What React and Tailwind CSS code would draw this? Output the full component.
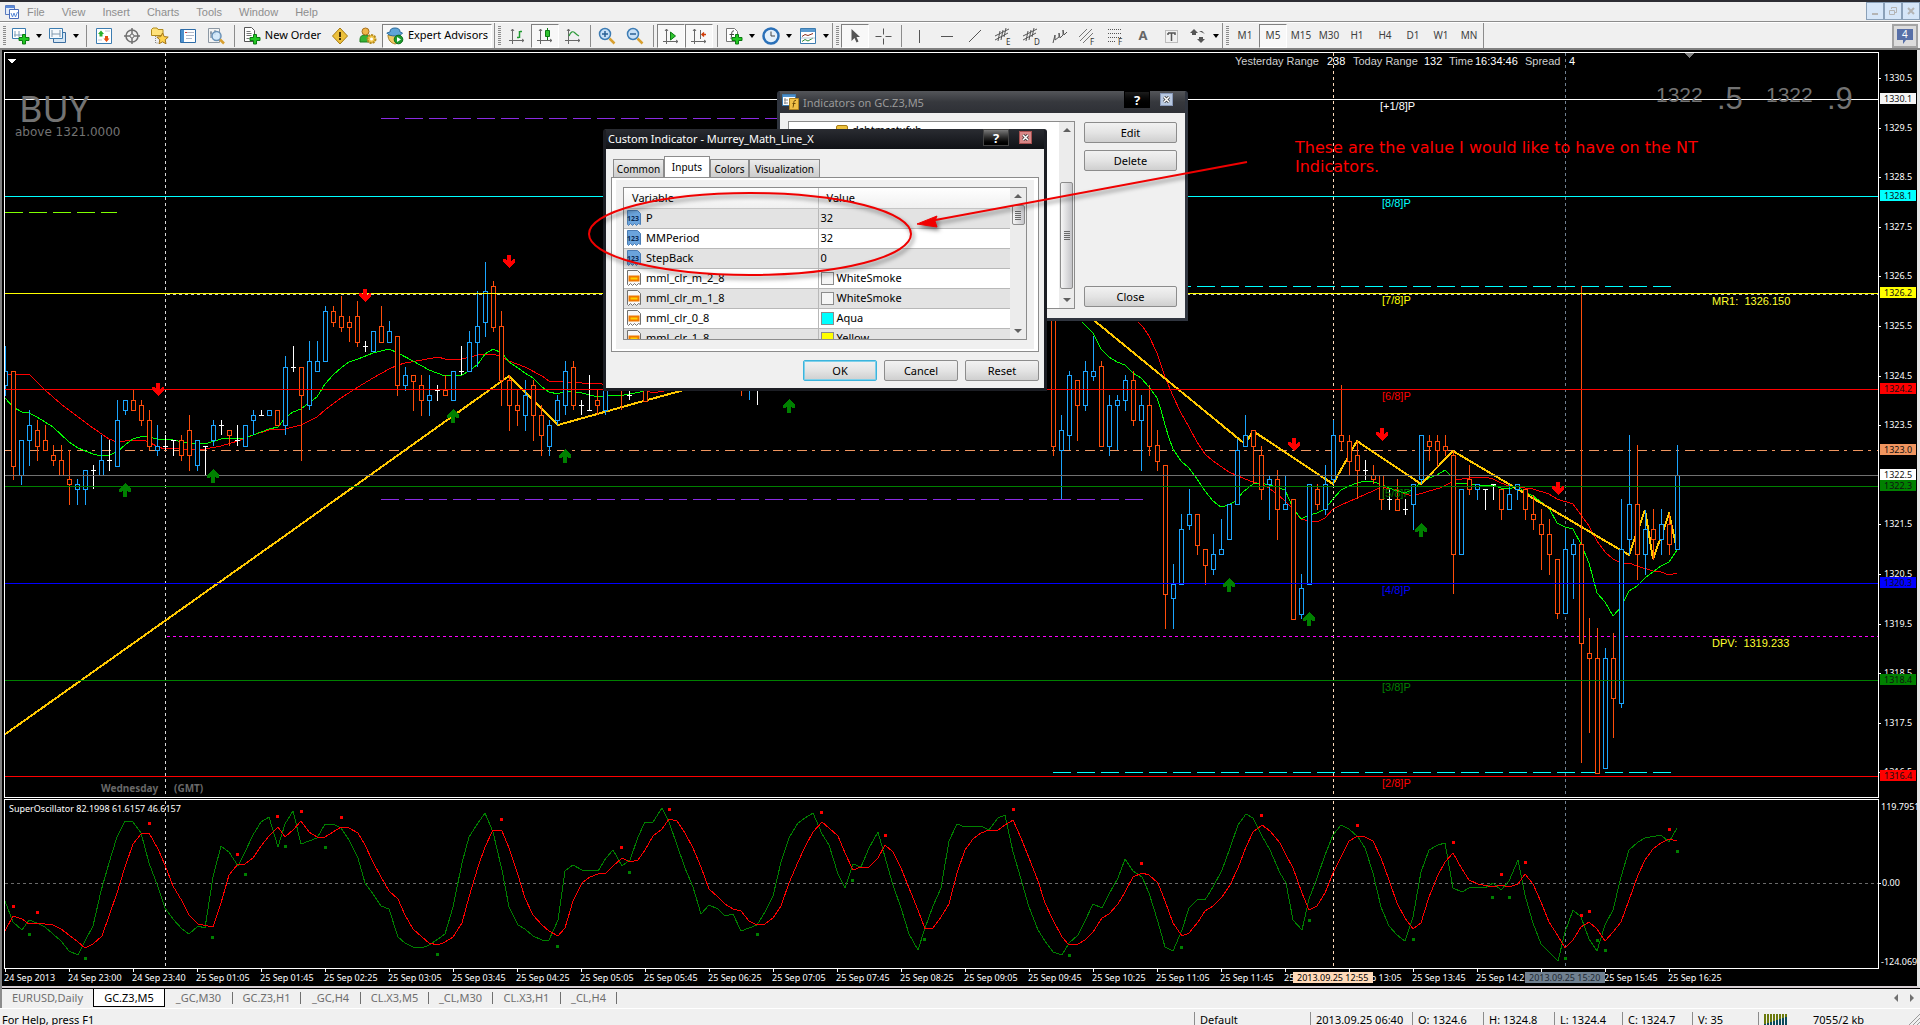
import React from "react";

const BLUE = "#1ba5ff";
const ORANGE = "#ff4d0a";
const WHITE = "#ffffff";
const colors = { b: BLUE, o: ORANGE, w: WHITE };

// [bar, kind, high, body top, body bottom, low], one group per recorded scale
const candleGroups = [
  {
    base: 200,
    unit: 3,
    rows: [
      [0, "b", 438, 514, 556, 588], [1, "o", 514, 514, 797, 840], [2, "b", 721, 721, 826, 855],
      [3, "b", 630, 676, 721, 797], [4, "o", 660, 691, 737, 783], [5, "o", 676, 721, 751, 751],
      [6, "o", 736, 766, 781, 797], [7, "o", 736, 781, 826, 826], [8, "o", 751, 838, 853, 914],
      [9, "b", 838, 853, 868, 914], [10, "b", 811, 811, 868, 914], [11, "w", 795, 811, 811, 868],
      [12, "b", 706, 781, 826, 826], [13, "w", 721, 781, 781, 812], [14, "b", 600, 661, 797, 797],
      [15, "b", 601, 601, 631, 646], [16, "o", 570, 601, 631, 631], [17, "o", 601, 616, 661, 678],
      [18, "o", 631, 661, 737, 751], [19, "b", 676, 737, 751, 767], [20, "w", 706, 737, 737, 751],
      [21, "w", 721, 721, 721, 767], [22, "o", 706, 721, 766, 782], [23, "o", 646, 691, 766, 812],
      [24, "b", 721, 721, 796, 812], [25, "w", 737, 737, 737, 826], [26, "b", 661, 676, 721, 737],
      [27, "w", 661, 676, 676, 706], [28, "o", 691, 691, 706, 737], [29, "w", 676, 721, 721, 737],
      [30, "b", 676, 676, 737, 737], [31, "b", 631, 646, 661, 706], [32, "w", 631, 646, 646, 646],
      [33, "b", 631, 631, 646, 646], [34, "o", 631, 631, 676, 676], [35, "b", 468, 500, 676, 706],
      [36, "w", 438, 500, 500, 516], [37, "o", 500, 500, 586, 782], [38, "b", 423, 484, 616, 631],
      [39, "b", 423, 484, 514, 514], [40, "b", 319, 334, 484, 484], [41, "o", 319, 334, 365, 380],
      [42, "o", 289, 349, 380, 395], [43, "o", 349, 365, 380, 425], [44, "o", 304, 349, 425, 440],
      [45, "w", 423, 438, 438, 455], [46, "b", 394, 394, 454, 454], [47, "o", 319, 379, 425, 425],
      [48, "b", 363, 394, 425, 425], [49, "o", 409, 409, 556, 588], [50, "b", 500, 526, 556, 573],
      [51, "o", 526, 526, 542, 632], [52, "o", 526, 556, 601, 647], [53, "b", 526, 586, 601, 647],
      [54, "w", 556, 571, 571, 602], [55, "o", 526, 571, 586, 586], [56, "b", 514, 514, 601, 601],
      [57, "w", 438, 514, 514, 526], [58, "b", 394, 425, 514, 514], [59, "b", 273, 379, 425, 500],
      [60, "b", 187, 274, 365, 410], [61, "o", 243, 259, 380, 395], [62, "o", 334, 379, 541, 617],
      [63, "o", 526, 541, 616, 692], [64, "o", 571, 616, 631, 678], [65, "b", 541, 586, 646, 692],
      [66, "o", 541, 556, 646, 722], [67, "o", 616, 646, 706, 767], [68, "b", 661, 676, 737, 767],
      [69, "b", 586, 601, 661, 676], [70, "b", 484, 514, 616, 646], [71, "o", 484, 500, 616, 631],
      [72, "w", 601, 616, 616, 646], [73, "w", 526, 631, 631, 631], [74, "o", 571, 601, 616, 646],
      [75, "b", 571, 571, 631, 646], [77, "o", 540, 540, 570, 631], [78, "w", 540, 586, 586, 600],
      [80, "o", 540, 540, 604, 604], [92, "o", 540, 540, 570, 588], [93, "b", 540, 540, 570, 600],
      [94, "w", 540, 560, 560, 616],
    ],
  },
  {
    base: 300,
    unit: 3,
    rows: [
      [131, "o", 0, 0, 437, 467], [132, "b", 346, 391, 451, 598], [133, "b", 213, 226, 406, 451],
      [134, "o", 241, 241, 316, 422], [135, "b", 183, 214, 316, 332], [136, "b", 108, 214, 227, 242],
      [137, "o", 183, 199, 437, 437], [138, "b", 286, 316, 437, 467], [139, "b", 286, 301, 316, 451],
      [140, "b", 226, 241, 301, 332], [141, "o", 213, 241, 361, 377], [142, "b", 286, 316, 361, 512],
      [143, "o", 256, 316, 437, 467], [144, "o", 391, 436, 482, 512], [145, "o", 496, 496, 881, 986],
      [146, "b", 792, 853, 895, 986], [147, "b", 643, 688, 853, 853], [148, "b", 568, 643, 674, 689],
      [149, "o", 643, 643, 734, 765], [150, "o", 748, 748, 794, 854], [151, "b", 703, 763, 808, 824],
      [152, "b", 658, 748, 763, 763], [153, "b", 613, 613, 718, 718], [154, "b", 418, 451, 613, 613],
      [155, "b", 346, 406, 437, 437], [156, "o", 391, 391, 437, 551], [157, "o", 437, 466, 568, 600],
      [158, "b", 526, 538, 553, 659], [159, "o", 511, 538, 628, 719], [160, "b", 526, 613, 628, 628],
      [161, "o", 598, 598, 956, 956], [162, "b", 823, 865, 941, 956], [163, "b", 553, 553, 853, 853],
      [164, "o", 553, 568, 613, 629], [165, "b", 496, 553, 628, 644], [166, "b", 361, 406, 538, 553],
      [167, "o", 256, 406, 422, 451], [168, "o", 406, 422, 482, 526], [169, "o", 422, 466, 511, 598],
      [170, "w", 481, 511, 511, 540], [171, "o", 496, 526, 538, 553], [172, "o", 526, 526, 598, 629],
      [173, "w", 568, 598, 598, 629], [174, "o", 538, 598, 629, 629], [175, "w", 598, 628, 628, 644],
      [176, "b", 553, 553, 613, 689], [177, "b", 406, 406, 538, 553], [178, "o", 406, 422, 437, 482],
      [179, "o", 406, 422, 451, 500], [180, "o", 406, 437, 451, 467], [181, "o", 452, 466, 763, 881],
      [182, "b", 568, 568, 763, 763],
    ],
  },
  {
    base: 240,
    unit: 2.8,
    rows: [
      [183, "o", 630, 670, 698, 713], [184, "b", 684, 684, 698, 727], [185, "w", 698, 698, 698, 755],
      [186, "w", 684, 684, 684, 727], [187, "o", 698, 698, 754, 783], [188, "b", 684, 712, 754, 754],
      [189, "b", 684, 684, 698, 727], [190, "o", 698, 698, 754, 783], [191, "o", 713, 768, 782, 811],
      [192, "o", 754, 796, 824, 923], [193, "o", 781, 824, 880, 937], [194, "o", 894, 894, 1045, 1060],
      [195, "b", 811, 866, 1045, 1045], [196, "b", 838, 852, 880, 1005], [197, "o", 129, 852, 1129, 1463],
      [198, "o", 1058, 1157, 1171, 1380], [199, "o", 1086, 1171, 1491, 1491], [200, "b", 1142, 1171, 1477, 1477],
      [201, "o", 1101, 1171, 1281, 1393], [202, "b", 725, 866, 1295, 1309], [203, "b", 546, 740, 838, 881],
      [204, "o", 575, 740, 880, 951], [205, "b", 755, 810, 880, 938], [206, "o", 754, 810, 838, 895],
      [207, "b", 754, 796, 838, 881], [208, "o", 767, 796, 852, 881], [209, "b", 575, 659, 866, 866],
    ],
  },
];

const trace = (x0, y0, kx, ky, list) => {
  const out = [];
  for (let i = 0; i < list.length; i += 2) {
    out.push(`${Math.round(x0 + list[i] / kx)},${Math.round(y0 + list[i + 1] / ky)}`);
  }
  return out.join(" ");
};

const slowLeft = trace(0, 200, 2.45, 3, [
  12, 523, 72, 523, 110, 570, 150, 612, 190, 650, 229, 685, 268, 718, 287, 727, 307, 723, 350, 721, 366, 725,
  386, 740, 405, 747, 425, 743, 445, 748, 503, 748, 542, 738, 582, 722, 621, 706, 660, 690, 699, 688, 738, 675,
  777, 652, 797, 630, 836, 594, 876, 562, 915, 534, 954, 508, 974, 495, 993, 488, 1033, 481, 1072, 472, 1091, 478,
  1131, 476, 1170, 466, 1209, 463, 1229, 470, 1248, 484, 1287, 502, 1327, 528, 1346, 543, 1385, 545, 1425, 550,
  1475, 553, 1568, 566, 1600, 578, 1640, 570,
]);
const fastLeft = trace(0, 200, 2.45, 3, [
  12, 595, 33, 622, 53, 635, 72, 640, 91, 652, 130, 682, 170, 727, 190, 745, 229, 762, 248, 767, 268, 766,
  287, 757, 307, 735, 326, 716, 350, 709, 386, 716, 425, 719, 464, 730, 503, 731, 542, 716, 601, 713, 621, 704,
  660, 688, 680, 682, 699, 655, 719, 635, 738, 628, 777, 590, 797, 552, 817, 524, 836, 503, 856, 487, 876, 478,
  915, 460, 954, 448, 974, 460, 1013, 484, 1052, 510, 1091, 529, 1131, 526, 1150, 514, 1170, 492, 1189, 462,
  1209, 448, 1229, 460, 1248, 486, 1268, 505, 1287, 518, 1307, 535, 1327, 560, 1346, 577, 1366, 581, 1385, 573,
  1425, 578, 1464, 592, 1484, 588, 1530, 584, 1568, 577, 1620, 560,
]);
const fastRight = [
  trace(1040, 300, 3, 3, [
    125, 66, 160, 98, 184, 147, 208, 170, 232, 187, 256, 196, 280, 218, 304, 233, 328, 262, 352, 293, 364, 330,
    376, 375, 388, 415, 400, 447, 424, 482, 448, 503, 472, 537, 496, 572, 520, 603, 544, 622, 568, 614, 592, 600,
    610, 575, 640, 551, 664, 548, 688, 556, 712, 560, 736, 570, 760, 625, 784, 657, 808, 645, 832, 638, 856, 626,
    880, 597, 904, 570, 928, 558, 952, 550, 976, 544, 1000, 545, 1024, 553, 1048, 563, 1072, 572, 1096, 578,
    1120, 566, 1144, 549, 1168, 534, 1192, 524,
  ]),
  trace(1440, 240, 3, 2.8, [
    16, 645, 32, 660, 48, 680, 88, 683, 136, 688, 160, 687, 184, 695, 208, 698, 232, 690, 256, 706, 280, 718,
    304, 734, 328, 750, 352, 792, 376, 804, 400, 810, 424, 852, 448, 905, 472, 987, 496, 1013, 520, 1052, 544, 1028,
    568, 984, 592, 969, 616, 947, 640, 930, 664, 912, 688, 902, 712, 868,
  ]),
].join(" ");
const slowRight = [
  trace(1040, 300, 3, 3, [
    295, 66, 310, 82, 328, 108, 352, 160, 376, 230, 400, 287, 424, 340, 448, 382, 472, 427, 496, 463, 520, 482,
    568, 515, 616, 536, 640, 545, 664, 551, 688, 563, 712, 583, 736, 602, 760, 628, 784, 657, 808, 663, 832, 667,
    856, 655, 880, 627, 904, 616, 952, 594, 1000, 572, 1024, 562, 1072, 570, 1096, 582, 1120, 587, 1168, 574,
  ]),
  trace(1440, 240, 3, 2.8, [
    0, 693, 48, 672, 88, 665, 136, 664, 160, 668, 184, 681, 208, 690, 256, 693, 280, 698, 328, 710, 352, 725,
    400, 740, 424, 770, 448, 800, 472, 843, 496, 873, 520, 893, 544, 903, 568, 903, 592, 913, 640, 928, 664, 929,
    688, 937, 712, 933,
  ]),
].join(" ");
const zigzagLeft = "4,735 279,540 509,376 558,425 640,402 684,390";
const zigzagRight =
  "1060,292 1096,322 1245,444 1253,431 1333,484 1357,441 1421,484 1453,451 1629,555 1645,510 1653,559 1669,514 1677,549";

const oscMain = [
  trace(0, 780, 2.45, 3, [
    12, 363, 33, 425, 53, 451, 72, 421, 91, 430, 111, 440, 130, 462, 150, 484, 170, 512, 190, 526, 209, 483,
    229, 437, 248, 333, 268, 250, 287, 172, 307, 123, 326, 127, 346, 160, 366, 250, 386, 320, 405, 383, 425, 416,
    445, 447, 464, 463, 484, 439, 503, 444, 523, 290, 542, 197, 562, 215, 582, 257, 601, 215, 621, 165, 640, 127,
    660, 112, 680, 200, 699, 132, 719, 94, 738, 192, 758, 182, 777, 175, 797, 132, 817, 132, 836, 144, 856, 180,
    876, 235, 895, 308, 915, 342, 934, 378, 954, 386, 974, 472, 993, 490, 1013, 500, 1033, 505, 1052, 496,
    1072, 477, 1091, 461, 1111, 380, 1131, 250, 1150, 170, 1170, 128, 1189, 100, 1209, 155, 1229, 270, 1248, 380,
    1268, 434, 1287, 447, 1307, 468, 1327, 481, 1346, 481, 1366, 420, 1385, 273, 1405, 256, 1425, 271, 1464, 274,
    1484, 234, 1503, 209, 1523, 259, 1543, 240, 1562, 170,
  ]),
  trace(640, 780, 2.45, 3, [
    12, 126, 33, 127, 53, 84, 72, 125, 91, 195, 111, 265, 130, 322, 150, 403, 170, 376, 190, 387, 209, 409,
    229, 403, 248, 454, 268, 443, 287, 434, 307, 395, 326, 348, 346, 245, 366, 175, 386, 130, 405, 113, 425, 99,
    445, 162, 464, 195, 484, 282, 503, 325, 523, 252, 542, 260, 562, 203, 582, 157, 601, 230, 621, 315, 640, 385,
    660, 463, 680, 511, 699, 445, 719, 378, 738, 325, 758, 183, 777, 132, 797, 142, 836, 139, 856, 149, 876, 114,
    895, 105, 915, 215, 934, 296, 954, 380, 974, 450, 993, 483, 1013, 516, 1033, 526, 1052, 490, 1072, 466,
    1091, 423, 1111, 373, 1131, 385, 1150, 343, 1170, 295, 1189, 238, 1209, 272, 1229, 290, 1248, 340, 1268, 425,
    1287, 500, 1307, 514, 1327, 450, 1346, 385, 1366, 358, 1385, 361, 1405, 320, 1425, 270, 1445, 205, 1464, 135,
    1484, 103, 1503, 115, 1523, 167, 1543, 210, 1568, 280,
  ]),
  trace(1280, 780, 2.45, 3, [
    14, 308, 33, 420, 53, 451, 72, 358, 91, 295, 111, 225, 131, 165, 150, 136, 170, 147, 190, 172, 209, 203,
    229, 280, 248, 380, 268, 437, 287, 464, 307, 484, 326, 410, 346, 275, 366, 210, 386, 196, 405, 189, 425, 323,
    445, 337, 464, 325, 484, 321, 503, 325, 523, 308, 542, 331, 562, 303, 582, 241, 601, 345, 621, 430, 640, 492,
    660, 516, 680, 542, 699, 455, 719, 391, 738, 410, 758, 478, 777, 514, 797, 435, 817, 390, 836, 290, 856, 211,
    876, 186, 895, 173, 934, 166, 954, 187, 972, 143,
  ]),
].join(" ");
const oscSignal = [
  trace(0, 780, 2.45, 3, [
    12, 454, 33, 408, 53, 416, 72, 433, 91, 428, 130, 434, 150, 448, 170, 464, 190, 487, 209, 505, 229, 493,
    250, 468, 268, 408, 287, 340, 307, 260, 326, 193, 346, 162, 366, 160, 386, 208, 405, 254, 425, 318, 445, 363,
    464, 406, 484, 433, 523, 440, 542, 370, 562, 285, 582, 253, 601, 253, 621, 235, 640, 198, 660, 167, 680, 140,
    699, 170, 719, 150, 738, 124, 758, 156, 777, 170, 797, 172, 817, 155, 836, 142, 856, 145, 876, 158, 895, 195,
    915, 245, 934, 290, 954, 334, 974, 356, 993, 405, 1013, 447, 1033, 472, 1052, 490, 1072, 494, 1091, 485,
    1111, 471, 1131, 430, 1150, 350, 1170, 262, 1189, 200, 1209, 151, 1229, 152, 1248, 205, 1268, 285, 1287, 355,
    1307, 404, 1327, 436, 1346, 453, 1366, 469, 1385, 443, 1405, 362, 1425, 310, 1445, 291, 1464, 283, 1484, 280,
    1503, 257, 1523, 235, 1543, 246, 1562, 240,
  ]),
  trace(640, 780, 2.45, 3, [
    12, 210, 33, 168, 53, 148, 72, 118, 91, 124, 111, 160, 130, 205, 150, 260, 170, 327, 190, 352, 209, 371,
    229, 387, 248, 394, 268, 424, 287, 434, 307, 433, 326, 415, 346, 378, 366, 310, 386, 245, 405, 200, 425, 155,
    445, 127, 464, 145, 484, 168, 503, 220, 523, 271, 542, 262, 562, 262, 582, 235, 601, 196, 621, 217, 640, 265,
    660, 325, 680, 390, 699, 448, 719, 444, 738, 412, 758, 372, 777, 280, 797, 211, 817, 178, 836, 160, 856, 151,
    876, 151, 895, 134, 915, 119, 934, 175, 954, 235, 974, 303, 993, 370, 1013, 420, 1033, 470, 1052, 496,
    1072, 492, 1091, 480, 1111, 455, 1131, 414, 1150, 401, 1170, 372, 1189, 335, 1209, 290, 1229, 280, 1248, 284,
    1268, 310, 1287, 362, 1307, 428, 1327, 469, 1346, 460, 1366, 425, 1385, 394, 1405, 378, 1425, 352, 1445, 315,
    1464, 265, 1484, 200, 1503, 155, 1523, 136, 1543, 153, 1568, 190,
  ]),
  trace(1280, 780, 2.45, 3, [
    14, 225, 33, 265, 53, 340, 72, 390, 91, 378, 111, 340, 131, 280, 150, 230, 170, 184, 190, 169, 209, 170,
    229, 184, 248, 235, 268, 300, 287, 370, 307, 415, 326, 448, 346, 430, 366, 350, 386, 285, 405, 245, 425, 218,
    445, 268, 464, 300, 484, 312, 523, 322, 542, 316, 562, 322, 582, 313, 601, 281, 621, 312, 640, 366, 660, 425,
    680, 467, 699, 503, 719, 480, 738, 440, 758, 425, 777, 447, 797, 482, 817, 457, 836, 425, 856, 360, 876, 285,
    895, 240, 915, 207, 934, 190, 954, 178, 972, 182,
  ]),
].join(" ");

const oscDots = {
  red: [
    [13, 906], [37, 912], [149, 823], [237, 854], [277, 816], [301, 811], [341, 817], [501, 819], [621, 847],
    [669, 809], [821, 812], [885, 835], [1013, 809], [1141, 863], [1261, 815], [1357, 825], [1453, 842],
    [1501, 874], [1525, 862], [1581, 915], [1589, 911], [1669, 829],
  ],
  green: [
    [29, 934], [85, 958], [212, 937], [245, 874], [285, 846], [325, 847], [437, 954], [557, 946], [629, 872],
    [757, 934], [852, 880], [924, 939], [1069, 955], [1181, 947], [1309, 920], [1413, 939], [1492, 897],
    [1509, 897], [1565, 958], [1597, 940], [1605, 950], [1677, 851],
  ],
};

const levels = [
  { y: 99, color: "#ffffff", label: "[+1/8]P", price: "1330.1", box: "#f5f5f5" },
  { y: 196, color: "#00ffff", label: "[8/8]P", price: "1328.1" },
  { y: 293, color: "#ffff00", label: "[7/8]P", price: "1326.2" },
  { y: 389, color: "#ff0000", label: "[6/8]P", price: "1324.2" },
  { y: 486, color: "#008000", label: "[5/8]P", price: "1322.3" },
  { y: 583, color: "#0000ff", label: "[4/8]P", price: "1320.3" },
  { y: 680, color: "#008000", label: "[3/8]P", price: "1318.4" },
  { y: 776, color: "#ff0000", label: "[2/8]P", price: "1316.4" },
];

const sellArrows = [[158, 389], [365, 295], [509, 261], [1294, 444], [1382, 434], [1558, 488]];
const buyArrows = [[125, 490], [213, 476], [453, 416], [565, 456], [789, 406], [1229, 585], [1309, 619], [1421, 530]];

const times = [
  "24 Sep 2013", "24 Sep 23:00", "24 Sep 23:40", "25 Sep 01:05", "25 Sep 01:45", "25 Sep 02:25", "25 Sep 03:05",
  "25 Sep 03:45", "25 Sep 04:25", "25 Sep 05:05", "25 Sep 05:45", "25 Sep 06:25", "25 Sep 07:05", "25 Sep 07:45",
  "25 Sep 08:25", "25 Sep 09:05", "25 Sep 09:45", "25 Sep 10:25", "25 Sep 11:05", "25 Sep 11:45", "25 Sep 12:25",
  "25 Sep 13:05", "25 Sep 13:45", "25 Sep 14:25", "25 Sep 15:05", "25 Sep 15:45", "25 Sep 16:25",
];

function Candle({ row, base, unit }) {
  const [bar, kind, high, top, bottom, low] = row;
  const x = 5 + bar * 8;
  const at = (v) => Math.round(base + v / unit);
  const color = colors[kind];
  const bodyTop = at(top);
  const bodyHeight = Math.max(at(bottom) - bodyTop, 1);
  return (
    <g fill={color}>
      <rect x={x} y={at(high)} width="1" height={Math.max(at(low) - at(high), 1)} />
      {kind === "w" ? (
        <rect x={x - 2} y={bodyTop} width="5" height="1" />
      ) : (
        <>
          <rect x={x - 2} y={bodyTop} width="5" height={bodyHeight + 1} />
          <rect x={x - 1} y={bodyTop + 1} width="3" height={bodyHeight - 1} fill="#000" />
        </>
      )}
    </g>
  );
}

function HLine({ y, color, from = 0, to = 4000, dash }) {
  return <line x1={from} x2={to} y1={y} y2={y} stroke={color} strokeDasharray={dash} transform="translate(0 0.5)" />;
}

function Verticals({ top, bottom }) {
  const rows = [[165, "#d8d8d8"], [1333, "#ffdab9"], [1565, "#708090"]];
  return rows.map(([x, color]) => (
    <line key={x} x1={x} x2={x} y1={top} y2={bottom} stroke={color} strokeDasharray="3 3" transform="translate(0.5 0)" />
  ));
}

function PricePane() {
  return (
    <svg className="block h-full w-full font-['Liberation_Sans',Arial,sans-serif]" shapeRendering="crispEdges">
      <g transform="translate(-5 -53)" fill="none">
        <Verticals top={53} bottom={797} />
        <HLine y={294} color="#c0c0c0" from={167} dash="3 3" />
        <HLine y={636} color="#ff00ff" from={167} dash="3 3" />
        <HLine y={118} color="#8a2be2" from={381} to={1143} dash="18 6" />
        <HLine y={499} color="#8a2be2" from={381} to={1143} dash="18 6" />
        <HLine y={212} color="#7fff00" from={5} to={117} dash="18 6" />
        <HLine y={286} color="#00ffff" from={1053} to={1671} dash="18 6" />
        <HLine y={772} color="#00ffff" from={1053} to={1671} dash="18 6" />
        <HLine y={450} color="#f0955f" from={5} dash="10 5 3 6" />
        <polyline points={slowLeft} stroke="#ff0000" />
        <polyline points={fastLeft} stroke="#00ff00" />
        <polyline points={slowRight} stroke="#ff0000" />
        <polyline points={fastRight} stroke="#00ff00" />
        <polyline points={zigzagLeft} stroke="#ffc800" strokeWidth="2" />
        <polyline points={zigzagRight} stroke="#ffc800" strokeWidth="2" />
        {candleGroups.map((group) =>
          group.rows.map((row) => <Candle key={row[0]} row={row} base={group.base} unit={group.unit} />)
        )}
        <HLine y={475} color="#707070" />
        {levels.map((l) => (
          <HLine key={l.y} y={l.y} color={l.color} />
        ))}
        {sellArrows.map(([x, y]) => (
          <path
            key={x}
            d="M-2-6h4v6l2-2h2v3L0 7-6 1v-3h2l2 2z"
            transform={`translate(${x} ${y})`}
            fill="#ff0000"
          />
        ))}
        {buyArrows.map(([x, y]) => (
          <path
            key={x}
            d="M-2 7h4V1l2 1h2v-3L0-7-6-1v3h2l2-1z"
            transform={`translate(${x} ${y})`}
            fill="#008000"
          />
        ))}
        <path d="M8 59h8l-4 5z" fill="#fff" />
        <path d="M1684 53h10l-5 5z" fill="#808080" />
        {levels.map((l) => (
          <text key={l.y} x={l.label.length > 6 ? 1380 : 1382} y={l.y + 11} fontSize="11" fill={l.color}>
            {l.label}
          </text>
        ))}
        <g fontSize="11" fill="#d0d0d0">
          <text x="1235" y="65">Yesterday Range</text>
          <text x="1327" y="65" fill="#fff">238</text>
          <text x="1353" y="65">Today Range</text>
          <text x="1424" y="65" fill="#fff">132</text>
          <text x="1449" y="65">Time</text>
          <text x="1475" y="65" fill="#fff">16:34:46</text>
          <text x="1525" y="65">Spread</text>
          <text x="1569" y="65" fill="#fff">4</text>
          <text x="1712" y="305" fill="#ffff30" xmlSpace="preserve">MR1:  1326.150</text>
          <text x="1712" y="647" fill="#ffff30" xmlSpace="preserve">DPV:  1319.233</text>
        </g>
        <g fill="#737373">
          <text x="1656" y="102" fontSize="21">1322</text>
          <text x="1717" y="109" fontSize="31">.5</text>
          <text x="1766" y="102" fontSize="21">1322</text>
          <text x="1827" y="109" fontSize="31">.9</text>
          <text x="19" y="122" fontSize="36" className="font-['Noto_Sans',sans-serif]">BUY</text>
          <text x="15" y="136" fontSize="12" className="font-['DejaVu_Sans',sans-serif]">above 1321.0000</text>
        </g>
        <g fontSize="10" fontWeight="700" fill="#696969" className="font-['Noto_Sans',sans-serif]">
          <text x="101" y="792">Wednesday</text>
          <text x="174" y="792">(GMT)</text>
        </g>
      </g>
    </svg>
  );
}

function OscillatorPane() {
  return (
    <svg className="block h-full w-full font-['Noto_Sans',sans-serif]" shapeRendering="crispEdges">
      <g transform="translate(-5 -800)" fill="none">
        <HLine y={883} color="#696969" from={5} dash="3 3" />
        <Verticals top={801} bottom={968} />
        <polyline points={oscMain} stroke="#008000" />
        <polyline points={oscSignal} stroke="#ff0000" />
        {oscDots.red.map(([x, y]) => (
          <rect key={x} x={x - 1} y={y - 1} width="3" height="3" fill="#ff0000" />
        ))}
        {oscDots.green.map(([x, y]) => (
          <rect key={x} x={x - 1} y={y - 1} width="3" height="3" fill="#008000" />
        ))}
        <text x="9" y="812" fontSize="9" fill="#fff">SuperOscillator 82.1998 61.6157 46.6157</text>
      </g>
    </svg>
  );
}

function TimeAxis() {
  return (
    <svg className="block h-[17px] w-full font-['Noto_Sans',sans-serif]" shapeRendering="crispEdges">
      <g fontSize="9" fill="#fff">
        {times.map((t, i) => (
          <g key={t}>
            <rect x={1 + i * 64} y="0" width="1" height="3" />
            <text x={i * 64} y="12">{t}</text>
          </g>
        ))}
        <rect x="1289" y="3" width="80" height="11" fill="#ffdab9" />
        <text x="1293" y="12" fill="#000">2013.09.25 12:55</text>
        <rect x="1521" y="3" width="80" height="11" fill="#708090" />
        <text x="1525" y="12" fill="#202830">2013.09.25 15:20</text>
      </g>
    </svg>
  );
}

function PriceAxis() {
  const ticks = Array.from({ length: 15 }, (_, i) => ({ y: Math.round(78 + i * 49.6), price: (1330.5 - i).toFixed(1) }));
  const boxes = [
    ...levels.map((l) => ({ y: l.y, price: l.price, fill: l.box || l.color })),
    { y: 450, price: "1323.0", fill: "#f0955f" },
    { y: 475, price: "1322.5", fill: "#ffffff" },
  ];
  return (
    <svg className="block h-full w-full font-['Noto_Sans',sans-serif]" shapeRendering="crispEdges">
      <g transform="translate(-1879 -52)" fontSize="9" fill="#fff">
        {ticks
          .filter((t) => t.price !== "1322.5")
          .map((t) => (
            <g key={t.price}>
              <rect x="1879" y={t.y} width="2" height="1" />
              <text x="1884" y={t.y + 3}>{t.price}</text>
            </g>
          ))}
        {boxes.map((b) => (
          <g key={b.price}>
            <rect x="1880" y={b.y - 6} width="36" height="11" fill={b.fill} />
            <text x="1884" y={b.y + 3} fill="#101010">{b.price}</text>
          </g>
        ))}
        <text x="1881" y="810">119.7951</text>
        <rect x="1879" y="883" width="2" height="1" />
        <text x="1882" y="886">0.00</text>
        <text x="1881" y="965">-124.069</text>
      </g>
    </svg>
  );
}

const Icon = ({ children, className = "" }) => (
  <svg viewBox="0 0 18 18" className={`h-[18px] w-[18px] shrink-0 ${className}`} fill="none">
    {children}
  </svg>
);

const Plus = () => (
  <path d="M10.5 7.5h3v3h3.5v3h-3.5V17h-3v-3.500H7v-3h3.500z" fill="#22c822" stroke="#0b7a12" />
);

const icons = {
  newChart: (
    <Icon>
      <path d="M.5 1.500h13v10h-13z" fill="#fff" stroke="#3c7cb0" />
      <path d="M3 4v6M2 8h9M7 4v6" stroke="#7f9fb8" />
      <Plus />
    </Icon>
  ),
  profiles: (
    <Icon>
      <path d="M4.500 5.500h12v10h-12z" fill="#d6e6f4" stroke="#3c6ea0" />
      <path d="M.5 1.500h13v10H.5z" fill="#f4f8fc" stroke="#3c7cb0" />
      <path d="M3 3v7M11 3v7M3 7h8" stroke="#8098ac" />
    </Icon>
  ),
  market: (
    <Icon>
      <path d="M1.500 1.500h15v15h-15z" fill="#fff" stroke="#3c7cb0" />
      <path d="M10 4h5M3 13h4" stroke="#c4ccd4" />
      <path d="M3 7 6 3.500 9 7H7.500v2.500h-3V7z" fill="#2cb02c" />
      <path d="m8.500 11.500 3 3.500 3-3.500H13v-2.500h-3v2.500z" fill="#e85010" />
    </Icon>
  ),
  target: (
    <Icon>
      <circle cx="9" cy="9" r="6" stroke="#707070" strokeWidth="1.500" />
      <path d="M9 1v16M1 9h16" stroke="#707070" strokeWidth="1.500" />
      <circle cx="9" cy="9" r="2" fill="#eee" stroke="#707070" />
    </Icon>
  ),
  favorites: (
    <Icon>
      <path d="M.5 2.500 2 1h4l1 1.500h5v6H.5z" fill="#ffe27a" stroke="#b08a1c" />
      <path d="M4.500 9v7h3" stroke="#888" strokeDasharray="1 1" />
      <path d="m11.500 6 1.700 3.600 4 .5-3 2.700.8 4-3.500-2-3.500 2 .8-4-3-2.700 4-.5z" fill="#ffd34d" stroke="#a37416" />
    </Icon>
  ),
  dataWindow: (
    <Icon>
      <path d="M1.500 2.500h15v13h-15z" fill="#fff" stroke="#2e6ca8" />
      <path d="M2 3h3v12H2z" fill="#4b8fcc" />
      <path d="M7 5.500h8M7 8.500h8M7 11.500h6" stroke="#b0b8c8" />
      <path d="M6 5.500h2" stroke="#d04040" />
    </Icon>
  ),
  tester: (
    <Icon>
      <path d="M1.500 1.500h11v14h-11z" fill="#f4f4f4" stroke="#8c98a4" />
      <path d="M4 4v7M3 6h2M8 3v5" stroke="#6c7c90" />
      <circle cx="9.500" cy="9" r="4.500" fill="#cfe6fa" fillOpacity=".85" stroke="#6a92b8" strokeWidth="1.500" />
      <path d="m13 12.500 4 4" stroke="#d8a030" strokeWidth="2.500" />
    </Icon>
  ),
  order: (
    <Icon>
      <path d="M1.500.5h7l3 3v11h-10z" fill="#fff" stroke="#555" />
      <path d="M3.500 4.500h4M3.500 6.500h5M3.500 8.500h5M3.500 11.500h3" stroke="#777" />
      <Plus />
    </Icon>
  ),
  warning: (
    <Icon>
      <path d="m9 1 7.500 8L9 17 1.500 9z" fill="#ecc03c" stroke="#a87c14" />
      <path d="M8 5h2v5H8zM8 11h2v2H8z" fill="#4a3408" />
    </Icon>
  ),
  expert: (
    <Icon>
      <path d="M1 13c0-4 2-5 5-5s5 1 5 5v2H1z" fill="#36b336" stroke="#1d7d1d" />
      <circle cx="6.500" cy="4.500" r="3.500" fill="#f0b54a" stroke="#a8701c" />
      <circle cx="12.500" cy="12" r="4" fill="#f2c84c" stroke="#b58a1e" strokeDasharray="2 1" strokeWidth="2" />
      <circle cx="12.500" cy="12" r="1.500" fill="#fff" />
    </Icon>
  ),
  robot: (
    <Icon>
      <path d="M2 8c0 5 3 8 7 9 4-1 6-4 6-8z" fill="#f0c860" stroke="#a8842c" />
      <path d="M4 5c0-3 2-4 5-4s5 1 5 4l2.500 1c-1 2-4 3-7.500 3S2 8 .8 6z" fill="#5fa4d8" stroke="#2f6d9c" />
      <circle cx="12.500" cy="12.500" r="4.300" fill="#1c9c2c" stroke="#0b6a18" />
      <path d="m11 10 4 2.500-4 2.500z" fill="#fff" />
    </Icon>
  ),
  bars: (
    <Icon>
      <path d="M4.500 2v15M1 13.500h15M3 4l1.500-2L6 4M14 12l2 1.500-2 1.500" stroke="#686868" />
      <path d="M9 10.500h2M11.500 11V4M12 4.500h2" stroke="#1f9a2f" strokeWidth="1.500" />
    </Icon>
  ),
  candles: (
    <Icon>
      <path d="M4.500 2v15M1 13.500h15M3 4l1.500-2L6 4M14 12l2 1.500-2 1.500" stroke="#686868" />
      <path d="M11.500 1v12" stroke="#0b7a12" />
      <path d="M9.500 3.500h4v6h-4z" fill="#2dc42d" stroke="#0b7a12" />
    </Icon>
  ),
  lineChart: (
    <Icon>
      <path d="M4.500 2v15M1 13.500h15M3 4l1.500-2L6 4M14 12l2 1.500-2 1.500" stroke="#686868" />
      <path d="M5 9c2-5 4-5 6-3 1 1 2 2 4 3" stroke="#2d9a3a" strokeWidth="1.200" />
    </Icon>
  ),
  zoomIn: (
    <Icon>
      <circle cx="7" cy="7" r="5.500" fill="#c8e0f6" stroke="#3d7cb4" strokeWidth="1.500" />
      <path d="M4 7h6M7 4v6" stroke="#2a6095" strokeWidth="1.500" />
      <path d="m11.500 11.500 5 5" stroke="#d8a030" strokeWidth="2.500" />
    </Icon>
  ),
  zoomOut: (
    <Icon>
      <circle cx="7" cy="7" r="5.500" fill="#c8e0f6" stroke="#3d7cb4" strokeWidth="1.500" />
      <path d="M4 7h6" stroke="#2a6095" strokeWidth="1.500" />
      <path d="m11.500 11.500 5 5" stroke="#d8a030" strokeWidth="2.500" />
    </Icon>
  ),
  autoScroll: (
    <Icon>
      <path d="M4.500 2v15M1 14.500h15M3 4l1.500-2L6 4M14 13l2 1.500-2 1.500" stroke="#686868" />
      <path d="m8.500 5 5 4-5 4z" fill="#2dc42d" stroke="#0b7a12" />
    </Icon>
  ),
  shift: (
    <Icon>
      <path d="M4.500 2v15M1 14.500h15M3 4l1.500-2L6 4M14 13l2 1.500-2 1.500M10.500 3v9" stroke="#686868" />
      <path d="M12 7.500h4M14 5.500l-2 2 2 2" stroke="#d03c08" strokeWidth="1.500" />
    </Icon>
  ),
  indicators: (
    <Icon>
      <path d="M1.500 1.500h8l3 3v10h-11z" fill="#fff" stroke="#777" />
      <path d="M9 4C6 3 7 8 6 12M4.500 7.500H9" stroke="#444" />
      <Plus />
    </Icon>
  ),
  clock: (
    <Icon>
      <circle cx="9" cy="9" r="7.500" fill="#e4f0fa" stroke="#2a70b8" strokeWidth="2.500" />
      <path d="M9 4.500V9h4" stroke="#444" />
    </Icon>
  ),
  template: (
    <Icon>
      <path d="M1.500 1.500h15v15h-15z" fill="#fff" stroke="#3c7cb0" />
      <path d="M2 2h14v3H2z" fill="#5a9ad0" />
      <path d="m3 9.500 3-2 3 1 5-2" stroke="#8a3020" />
      <path d="m3 14.500 3-2 3 1.500 5-3" stroke="#2d8a3a" />
      <path d="M2 11h14" stroke="#b8c8d8" />
    </Icon>
  ),
  cursor: (
    <Icon>
      <path d="M5.500 2v12l3-3 2 4.500 2-1-2-4.500H14z" fill="#555" />
    </Icon>
  ),
  cross: (
    <Icon>
      <path d="M9.500 1.500v6M9.500 11.500v6M1.500 9.500h6M11.500 9.500h6" stroke="#555" />
    </Icon>
  ),
  vline: (
    <Icon>
      <path d="M9.500 3v13" stroke="#555" />
    </Icon>
  ),
  hline: (
    <Icon>
      <path d="M3 9.500h12" stroke="#555" />
    </Icon>
  ),
  trend: (
    <Icon>
      <path d="m3 15 12-12" stroke="#555" />
    </Icon>
  ),
  channelE: (
    <Icon>
      <path d="m1 9 14-7M1 13l13-7M4 14l2-10M7 13l2-10M10 10l2-9" stroke="#555" />
      <text x="12" y="18" fontSize="8" fill="#333">E</text>
    </Icon>
  ),
  channelD: (
    <Icon>
      <path d="m1 9 14-7M1 13l13-7M4 14l2-10M7 13l2-10M10 10l2-9" stroke="#555" />
      <text x="12" y="18" fontSize="8" fill="#333">D</text>
    </Icon>
  ),
  fork: (
    <Icon>
      <path d="m3 16 2-8v5l4-3V6l1 5 3-3V3l1 5 3-3" stroke="#555" />
    </Icon>
  ),
  fibChannel: (
    <Icon>
      <path d="m1 10 8-8M2 14 14 2M5 16 15 6" stroke="#777" />
      <text x="12" y="18" fontSize="8" fill="#333">F</text>
    </Icon>
  ),
  fib: (
    <Icon>
      <path d="M2 2.500h13M2 6.500h13M2 10.500h13M2 14.500h8" stroke="#555" strokeDasharray="1 1" />
      <text x="12" y="18" fontSize="8" fill="#333">F</text>
    </Icon>
  ),
  textLabel: (
    <Icon>
      <path d="M3.500 3.500h12v12h-12z" stroke="#888" strokeDasharray="1 1" />
      <path d="M6 6h7v2M9.500 6v8M6 6v2" stroke="#555" strokeWidth="1.500" />
    </Icon>
  ),
  arrows: (
    <Icon>
      <path d="m1 6 4-4 4 4H7v2H3V6zM16 12l-4 4-4-4h2v-2h4v2zM10 4h3l3 3" fill="#555" />
    </Icon>
  ),
};

function ToolButton({ icon, label, pressed, children, className = "w-7" }) {
  const look = pressed
    ? "border-t-[#808080] border-l-[#808080] border-r-white border-b-white bg-[#f8f8f8]"
    : "border-transparent";
  return (
    <button
      type="button"
      aria-label={label}
      aria-pressed={pressed}
      className={`flex h-[24px] shrink-0 items-center justify-center border ${look} ${className}`}
    >
      {icon && icons[icon]}
      {children}
    </button>
  );
}

function DropButton({ icon, label }) {
  return (
    <ToolButton icon={icon} label={label} className="w-[37px] gap-1.5">
      <svg viewBox="0 0 6 4" className="h-1 w-1.5">
        <path d="M0 0h6L3 4z" fill="#000" />
      </svg>
    </ToolButton>
  );
}

const Sep = ({ className = "w-2" }) => (
  <div className={`flex shrink-0 justify-center ${className}`}>
    <div className="h-[22px] w-px bg-[#8c8c8c]" />
  </div>
);

const Grip = () => (
  <div className="flex shrink-0 items-center">
    <div className="h-[26px] w-px bg-[#8c8c8c]" />
    <svg className="mr-[2px] ml-[3px] h-5 w-[3px]">
      <path d="M1.500 0v20" stroke="#8c8c8c" strokeWidth="3" strokeDasharray="1 1" />
    </svg>
  </div>
);

function MenuBar() {
  const items = ["File", "View", "Insert", "Charts", "Tools", "Window", "Help"];
  return (
    <nav className="flex h-5 items-center border-b border-[#8c8c8c] pl-[5px] font-['Liberation_Sans',Arial,sans-serif] text-[11px] text-[#8e8e8e]">
      <svg viewBox="0 0 14 14" className="h-[14px] w-[14px]">
        <path d="M.5.500h9v9h-9z" fill="#e4ecf8" stroke="#5a7cc0" />
        <path d="M1 1h8v2H1z" fill="#5a8ad8" />
        <path d="M4.500 4.500h9v9h-9z" fill="#fff" stroke="#4a6cb8" />
        <path d="m6 8 1.500 4L9 8l1.500 4 2-5" fill="none" stroke="#5a8ad8" />
      </svg>
      <div className="flex pl-2">
        {items.map((item) => (
          <button key={item} type="button" className="pr-[17px] leading-4">
            {item}
          </button>
        ))}
      </div>
      <div className="ml-auto flex self-start">
        {["Minimize", "Restore", "Close"].map((name, i) => (
          <button
            key={name}
            type="button"
            aria-label={name}
            className="flex h-[18px] w-[18px] items-center justify-center border border-[#8aa0b8] bg-[#d6e6f8]"
          >
            <svg viewBox="0 0 10 10" className="h-[10px] w-[10px]" fill="none" stroke="#b4b4b4">
              {i === 0 && <path d="M2 8h6" strokeWidth="2" />}
              {i === 1 && <path d="M3.500 3V1.500h5v5H7M1.500 4.500h5v4h-5z" />}
              {i === 2 && <path d="m2 2 6 6M8 2 2 8" strokeWidth="2" />}
            </svg>
          </button>
        ))}
      </div>
    </nav>
  );
}

function Toolbar() {
  const frames = ["M1", "M5", "M15", "M30", "H1", "H4", "D1", "W1", "MN"];
  return (
    <div className="flex h-[26px] items-center border-t border-white pr-[2px] text-[11px] text-black">
      <svg className="mr-[2px] ml-[3px] h-5 w-[3px]">
        <path d="M1.500 0v20" stroke="#8c8c8c" strokeWidth="3" strokeDasharray="1 1" />
      </svg>
      <DropButton icon="newChart" label="New chart" />
      <DropButton icon="profiles" label="Profiles" />
      <Sep />
      <ToolButton icon="market" label="Market watch" />
      <ToolButton icon="target" label="Data window" />
      <ToolButton icon="favorites" label="Navigator" />
      <ToolButton icon="dataWindow" label="Terminal" />
      <ToolButton icon="tester" label="Strategy tester" />
      <Sep />
      <ToolButton icon="order" label="New Order" className="w-[88px] gap-1">
        New Order
      </ToolButton>
      <ToolButton icon="warning" label="Alerts" />
      <ToolButton icon="expert" label="Options" />
      <ToolButton icon="robot" label="Expert Advisors" pressed className="mr-[2px] w-[110px] gap-1">
        Expert Advisors
      </ToolButton>
      <Grip />
      <ToolButton icon="bars" label="Bar chart" />
      <ToolButton icon="candles" label="Candlesticks" pressed />
      <ToolButton icon="lineChart" label="Line chart" />
      <Sep className="w-1.5" />
      <ToolButton icon="zoomIn" label="Zoom in" />
      <ToolButton icon="zoomOut" label="Zoom out" />
      <Sep />
      <ToolButton icon="autoScroll" label="Auto scroll" pressed />
      <ToolButton icon="shift" label="Chart shift" pressed />
      <Sep />
      <DropButton icon="indicators" label="Indicators" />
      <DropButton icon="clock" label="Periods" />
      <DropButton icon="template" label="Templates" />
      <Grip />
      <ToolButton icon="cursor" label="Cursor" pressed />
      <ToolButton icon="cross" label="Crosshair" />
      <Sep />
      <ToolButton icon="vline" label="Vertical line" />
      <ToolButton icon="hline" label="Horizontal line" />
      <ToolButton icon="trend" label="Trendline" />
      <ToolButton icon="channelE" label="Equidistant channel" />
      <ToolButton icon="channelD" label="Deviation channel" />
      <ToolButton icon="fork" label="Pitchfork" />
      <ToolButton icon="fibChannel" label="Fibonacci channel" />
      <ToolButton icon="fib" label="Fibonacci retracement" />
      <ToolButton label="Text">
        <span className="text-[13px] font-bold text-[#666]">A</span>
      </ToolButton>
      <ToolButton icon="textLabel" label="Text label" />
      <DropButton icon="arrows" label="Arrows" />
      <Grip />
      {frames.map((f) => (
        <ToolButton key={f} label={f} pressed={f === "M5"}>
          <span className="text-[10px] text-[#404040]">{f}</span>
        </ToolButton>
      ))}
      <div className="h-[26px] w-px bg-[#8c8c8c]" />
      <button
        type="button"
        aria-label="Messages"
        className="ml-auto flex h-6 w-[26px] items-center justify-center border-2 border-[#a4a4a4] bg-[#dcdcdc]"
      >
        <svg viewBox="0 0 16 16" className="h-4 w-4">
          <path d="M0 1h16v11H9l-3 4v-4H0z" fill="#5870a8" />
          <text x="5" y="10" fontSize="10" fill="#fff">4</text>
        </svg>
      </button>
    </div>
  );
}

function DialogButton({ children, primary, className = "w-[74px]" }) {
  return (
    <button
      type="button"
      className={`h-[21px] rounded-[2px] border bg-linear-to-b from-[#f2f2f2] via-[#e4e4e4] to-[#cfcfcf] text-[11px] leading-4 text-black ${
        primary ? "border-[#3cb4dc] shadow-[inset_0_0_0_1px_#7fd0ea]" : "border-[#8c8c8c]"
      } ${className}`}
    >
      {children}
    </button>
  );
}

function TitleButtons({ closeColor, helpColor }) {
  return (
    <div className="ml-auto flex items-start gap-[10px] self-start pr-[12px]">
      <button
        type="button"
        aria-label="Help"
        className={`h-[17px] w-[26px] border bg-linear-to-b text-[13px] leading-[14px] font-bold text-white ${helpColor}`}
      >
        ?
      </button>
      <button
        type="button"
        aria-label="Close"
        className={`mt-[2px] flex h-[13px] w-[13px] items-center justify-center border ${closeColor}`}
      >
        <svg viewBox="0 0 7 7" className="h-[7px] w-[7px]">
          <path d="m1 1 5 5M6 1 1 6" stroke="#333" strokeWidth="3" />
          <path d="m1 1 5 5M6 1 1 6" stroke="#fff" strokeWidth="1.500" />
        </svg>
      </button>
    </div>
  );
}

const Triangle = ({ up }) => (
  <svg viewBox="0 0 8 4" className="h-1 w-2">
    <path d={up ? "M0 4h8L4 0z" : "M0 0h8L4 4z"} fill="#606060" />
  </svg>
);

const Thumb = ({ className }) => (
  <div
    className={`flex w-[13px] items-center justify-center rounded-[2px] border border-[#8c8c8c] bg-linear-to-r from-[#f6f6f6] to-[#c4c4c8] ${className}`}
  >
    <svg className="h-[9px] w-[6px]">
      <path d="M0 .5h6M0 2.500h6M0 4.500h6M0 6.500h6M0 8.500h6" stroke="#6a6a6a" />
    </svg>
  </div>
);

function IndicatorsDialog() {
  return (
    <section className="absolute top-[91px] left-[777px] flex h-[230px] w-[411px] flex-col rounded-t-[3px] border-x-[3px] border-b-[3px] border-[#30353f] bg-[#f0f0f0]">
      <header className="flex h-[22px] items-center bg-linear-to-b from-[#54565a] via-[#36383d] to-[#2e3036] pl-[2px]">
        <svg viewBox="0 0 18 16" className="h-4 w-[18px]">
          <path d="M.5.500h13v11H.5z" fill="#fff" stroke="#3c7cb0" />
          <path d="M1 1h12v2H1z" fill="#4b8fcc" />
          <path d="M3 4v6M2 6h4M2 9h4" stroke="#888" />
          <path d="M7.500 4.500h9v11h-9z" fill="#f0c048" stroke="#b08420" />
          <path d="M14 6.500c-3-1-2 4-3 7M10.500 9.500h3" stroke="#6b4a08" fill="none" />
        </svg>
        <h2 className="pt-px pl-[3px] text-[11px] leading-4 text-[#9a9a9a]">Indicators on GC.Z3,M5</h2>
        <TitleButtons helpColor="border-black from-[#1c1c1c] to-black" closeColor="border-[#8898b8] bg-[#b8c8e0]" />
      </header>
      <div className="flex flex-1 justify-between py-2 pr-2 pl-2">
        <div className="flex h-[188px] w-[287px] border border-[#8c8c8c] bg-white">
          <div className="flex h-4 flex-1 items-start gap-1 overflow-hidden pl-[47px] text-[11px] leading-4">
            <span className="mt-[3px] h-3 w-3 shrink-0 rounded-[2px] border border-[#a87c14] bg-[#ecc03c]" />
            <span>dshtmsstxfxh</span>
          </div>
          <div className="flex w-[15px] flex-col items-center bg-[#ececec] py-[6px]">
            <Triangle up />
            <Thumb className="mt-[50px] h-[107px]" />
            <div className="mt-auto flex">
              <Triangle />
            </div>
          </div>
        </div>
        <div className="flex flex-col items-stretch gap-[7px] pt-px">
          <DialogButton className="w-[93px]">Edit</DialogButton>
          <DialogButton className="w-[93px]">Delete</DialogButton>
          <DialogButton className="mt-auto mb-[3px] w-[93px]">Close</DialogButton>
        </div>
      </div>
    </section>
  );
}

const variables = [
  { name: "P", value: "32" },
  { name: "MMPeriod", value: "32" },
  { name: "StepBack", value: "0" },
  { name: "mml_clr_m_2_8", value: "WhiteSmoke", swatch: "bg-[#f5f5f5]" },
  { name: "mml_clr_m_1_8", value: "WhiteSmoke", swatch: "bg-[#f5f5f5]" },
  { name: "mml_clr_0_8", value: "Aqua", swatch: "bg-[#00ffff]" },
  { name: "mml_clr_1_8", value: "Yellow", swatch: "bg-[#ffff00]" },
];

function VariableIcon({ color }) {
  return (
    <svg viewBox="0 0 16 16" className="h-4 w-4 shrink-0">
      <path
        d="M1.500.500h10l3 3v11l-2-1-2 2-2-2-2 2-2-2-2 2-1-1z"
        fill={color ? "#f8f8f8" : "#6ba4dc"}
        stroke={color ? "#707070" : "#4a7cb4"}
      />
      {color ? (
        <path d="M3.500 6.500h9v4h-9z" fill="#ffd000" stroke="#f07800" strokeWidth="2" />
      ) : (
        <text x="1" y="11" fontSize="7" fontWeight="700" fill="#0c2c54">123</text>
      )}
    </svg>
  );
}

function CustomDialog() {
  const tabs = [
    ["Common", "w-[51px]"],
    ["Inputs", "w-[46px]"],
    ["Colors", "w-[39px]"],
    ["Visualization", "w-[71px]"],
  ];
  return (
    <section className="absolute top-[129px] left-[603px] flex h-[262px] w-[444px] flex-col rounded-t-[3px] border-x-[3px] border-b-[3px] border-[#1c1e24] bg-[#f0f0f0] text-[11px] leading-4 text-black">
      <header className="flex h-5 items-center bg-linear-to-b from-[#2a2c32] to-[#101216] pl-[2px]">
        <h2 className="text-[11px] leading-4 text-white">Custom Indicator - Murrey_Math_Line_X</h2>
        <TitleButtons helpColor="border-[#444] from-[#7a7a7a] to-black" closeColor="border-[#a85050] bg-[#d88888]" />
      </header>
      <div className="flex h-7 items-end pl-[7px]" role="tablist">
        {tabs.map(([name, width]) => (
          <button
            key={name}
            type="button"
            role="tab"
            aria-selected={name === "Inputs"}
            className={`border border-b-0 border-[#8c8c8c] text-[10px] ${width} ${
              name === "Inputs" ? "h-[21px] bg-white" : "h-[18px] bg-linear-to-b from-[#ececec] to-[#cccccc]"
            }`}
          >
            {name}
          </button>
        ))}
      </div>
      <div className="mx-[5px] h-[175px] border border-[#8c8c8c] bg-white px-1 py-[2px]">
        <div className="h-full bg-[#f0f0f0] px-[7px] py-[7px]">
          <div className="flex h-[153px] overflow-hidden border border-[#8c8c8c] bg-white">
            <table className="w-full flex-1 table-fixed self-start text-left">
              <thead>
                <tr className="h-5 bg-linear-to-b from-white to-[#f0f0f0]">
                  <th className="w-[194px] border-r border-b border-[#c4c4c4] pl-2 font-normal">Variable</th>
                  <th className="border-b border-[#c4c4c4] pl-2 font-normal">Value</th>
                </tr>
              </thead>
              <tbody>
                {variables.map((v) => (
                  <tr key={v.name} className="h-5 odd:bg-[#e3e3e3]">
                    <td className="border-r border-b border-[#b8b8b8] p-0 pl-[2px]">
                      <div className="flex items-center gap-1">
                        <VariableIcon color={v.swatch} />
                        {v.name}
                      </div>
                    </td>
                    <td className="border-b border-[#b8b8b8] p-0">
                      <div className="flex items-center gap-[3px] pl-[2px]">
                        {v.swatch && <span className={`h-[13px] w-[13px] border border-[#8c8c8c] ${v.swatch}`} />}
                        {v.value}
                      </div>
                    </td>
                  </tr>
                ))}
              </tbody>
            </table>
            <div className="flex w-4 shrink-0 flex-col items-center bg-[#ececec] py-[6px]">
              <Triangle up />
              <Thumb className="mt-[7px] h-5" />
              <div className="mt-auto flex">
                <Triangle />
              </div>
            </div>
          </div>
        </div>
      </div>
      <div className="flex justify-end gap-[7px] pt-2 pr-[5px]">
        <DialogButton primary>OK</DialogButton>
        <DialogButton>Cancel</DialogButton>
        <DialogButton>Reset</DialogButton>
      </div>
    </section>
  );
}

function Annotation() {
  return (
    <>
      <svg className="pointer-events-none absolute top-0 left-0 h-[300px] w-[1300px]" fill="none" stroke="#f00000">
        <g className="drop-shadow-[2px_3px_2px_rgba(0,0,0,0.5)]">
          <ellipse cx="750" cy="234" rx="161" ry="41" strokeWidth="2" />
          <path d="M1247 162 930 221" strokeWidth="2" />
          <path d="m917 224 20-8-2 5 2 6z" fill="#f00000" />
        </g>
      </svg>
      <p className="absolute top-[138px] left-[1295px] w-[430px] font-['DejaVu_Sans',sans-serif] text-[16px] leading-[19px] text-[#ff0000]">
        These are the value I would like to have on the NT Indicators.
      </p>
    </>
  );
}

function ChartTabs() {
  const tabs = [
    ["EURUSD,Daily", "w-[91px]"],
    ["GC.Z3,M5", "w-[72px]"],
    ["_GC,M30", "w-[68px]"],
    ["GC.Z3,H1", "w-[68px]"],
    ["_GC,H4", "w-[60px]"],
    ["CL.X3,M5", "w-[68px]"],
    ["_CL,M30", "w-[64px]"],
    ["CL.X3,H1", "w-[68px]"],
    ["_CL,H4", "w-[56px]"],
  ];
  return (
    <div className="flex h-[19px] items-start border-l-2 border-[#8c8c8c] text-[11px] text-[#6e6e6e]" role="tablist">
      {tabs.map(([name, width]) => {
        const active = name === "GC.Z3,M5";
        return (
          <button
            key={name}
            type="button"
            role="tab"
            aria-selected={active}
            className={`flex items-center justify-center ${width} ${
              active ? "h-[18px] border-x border-b border-black bg-white text-black" : "h-[17px]"
            }`}
          >
            <span className="flex-1 leading-4">{name}</span>
            {!active && name !== "EURUSD,Daily" && <span className="h-3 w-px bg-[#707070]" />}
          </button>
        );
      })}
      <div className="mt-[5px] mr-[6px] ml-auto flex gap-[12px]">
        <svg viewBox="0 0 4 8" className="h-2 w-1"><path d="M4 0v8L0 4z" fill="#707070" /></svg>
        <svg viewBox="0 0 4 8" className="h-2 w-1"><path d="M0 0v8l4-4z" fill="#707070" /></svg>
      </div>
    </div>
  );
}

function StatusBar() {
  const cells = [
    ["Default", "w-[116px]"],
    ["2013.09.25 06:40", "w-[102px]"],
    ["O: 1324.6", "w-[71px]"],
    ["H: 1324.8", "w-[71px]"],
    ["L: 1324.4", "w-[68px]"],
    ["C: 1324.7", "w-[70px]"],
    ["V: 35", "w-[66px]"],
  ];
  return (
    <footer className="flex h-[17px] items-start overflow-hidden border-t border-white pt-[3px] text-[11px] leading-4 text-black">
      <span className="flex-1 pl-[2px]">For Help, press F1</span>
      {cells.map(([text, width]) => (
        <span key={text} className={`border-l border-[#8c8c8c] pl-[5px] whitespace-nowrap ${width}`}>
          {text}
        </span>
      ))}
      <div className="flex w-[162px] border-l border-[#8c8c8c] pl-[5px]">
        <svg className="mt-[2px] h-3 w-6">
          {[0, 1, 2, 3, 4, 5, 6, 7].map((i) => (
            <g key={i}>
              <rect x={i * 3} y="0" width="2" height="12" fill="#6b7a0c" />
              <rect x={i * 3} y={10 - i} width="2" height="12" fill="#0c4a5c" />
            </g>
          ))}
        </svg>
        <span className="pl-[25px]">7055/2 kb</span>
        <svg className="mt-[2px] ml-auto h-3 w-3" stroke="#9a9a9a">
          <path d="M0 12 12 0M4 12l8-8M8 12l4-4" />
        </svg>
      </div>
    </footer>
  );
}

export default function App() {
  return (
    <main className="relative flex h-screen min-h-[600px] flex-col overflow-hidden border-t-2 border-[#2d2d33] bg-[#f0f0f0] font-['Noto_Sans',sans-serif]">
      <MenuBar />
      <Toolbar />
      <div className="flex min-h-0 flex-1 flex-col border-t-2 border-l-2 border-t-[#808080] border-l-[#808080]">
        <div className="flex min-h-0 flex-1 border-r-[3px] border-b-2 border-r-[#e4e4e4] border-b-[#d8d0d4] bg-black pt-[2px] pl-[2px]">
          <div className="flex min-w-0 flex-1 flex-col">
            <div className="min-h-0 flex-1 border border-white">
              <PricePane />
            </div>
            <div className="mt-px h-[170px] border border-white">
              <OscillatorPane />
            </div>
            <TimeAxis />
          </div>
          <div className="w-[38px] shrink-0 overflow-hidden">
            <PriceAxis />
          </div>
        </div>
        <div className="h-px bg-black" />
      </div>
      <ChartTabs />
      <StatusBar />
      <div className="absolute -top-[2px] left-0">
        <IndicatorsDialog />
        <CustomDialog />
        <Annotation />
      </div>
    </main>
  );
}
